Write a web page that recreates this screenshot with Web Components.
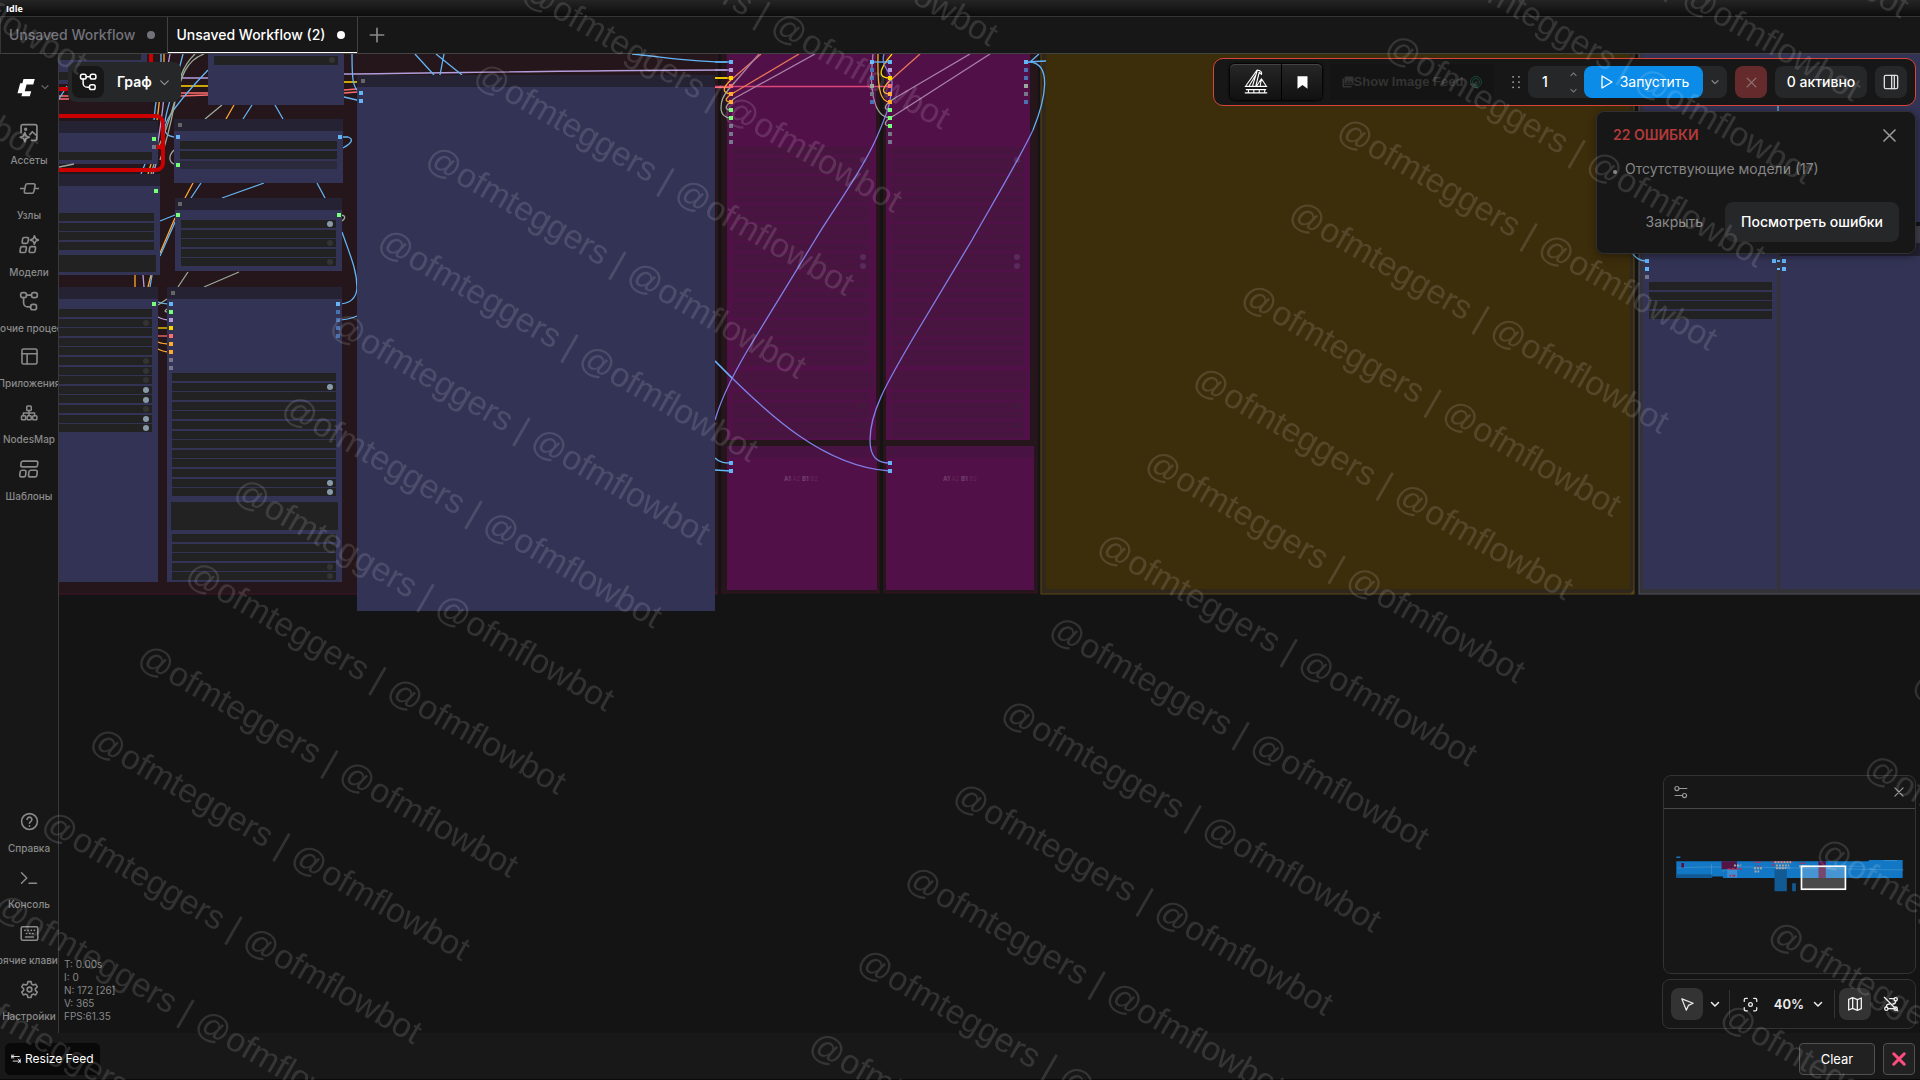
<!DOCTYPE html>
<html lang="ru">
<head>
<meta charset="utf-8">
<title>Unsaved Workflow (2)</title>
<style>
    :root {
        --font-ui: Inter, "Liberation Sans", sans-serif;
        --color-bg: #141414;
        --color-panel: #171717;
        --color-raised: #262729;
        --color-line: #333333;
        --color-text: #ffffff;
        --color-muted: #8a8a8a;
        --color-primary: #0b8ce9;
        --color-danger: #b33a3a;
    }

    html, body {
        height: 100%;
    }

    body {
        margin: 0;
        overflow: hidden;
        background: var(--color-bg);
        color: var(--color-text);
        font: 14px/20px var(--font-ui);
    }
</style>
</head>
<body>
<workflow-app></workflow-app>

<script>
    // Shared by every shadow root.
    const RESET = `
        :host, * { box-sizing: border-box; }
        button, input {
            display: inline-flex;
            align-items: center;
            justify-content: center;
            margin: 0;
            padding: 0;
            border: 0;
            background: none;
            color: inherit;
            font: inherit;
            white-space: nowrap;
        }
        button { cursor: pointer; }
    `;

    const ICONS = {
        plus: '<path d="M12 4v16M4 12h16"/>',
        x: '<path d="M5 5l14 14M19 5L5 19"/>',
        down: '<path d="M5 9l7 7 7-7"/>',
        up: '<path d="M5 15l7-7 7 7"/>',
        logo: '<path fill="currentColor" stroke="none" d="M9 2.500h13.500l-1.800 6.500h-8l-2.200 8h7.800l-1.800 6H6.500l1-3.500H1.800L5 7.500h2.700z"/>',
        assets: '<path d="M2.500 11V4a2 2 0 0 1 2-2h15a2 2 0 0 1 2 2v15a2 2 0 0 1-2 2H15M13 14l3-3.500 5.500 5"/><circle cx="8" cy="7.500" r="1"/><path d="M7 11.500l1.500 4 4 1.500-4 1.500-1.500 4-1.500-4-4-1.500 4-1.500z"/>',
        nodes: '<path d="M0 12h5.500M18.500 12H24M17.500 6H9.500A2.500 2.500 0 0 0 7 8L5.500 15.500A2 2 0 0 0 7.500 18H15a2.500 2.500 0 0 0 2.500-2L19 8.500A2 2 0 0 0 17.500 6z"/>',
        models: '<g transform="skewX(-8)"><rect x="5" y="3" width="7" height="7" rx="1.500"/><rect x="4" y="14" width="7" height="7" rx="1.500"/><rect x="15" y="14" width="7" height="7" rx="1.500"/></g><path d="M18.500 1l1.500 3.500L23.500 6 20 7.500 18.500 11 17 7.500 13.500 6 17 4.500z"/>',
        workflow: '<rect x="2" y="2" width="7" height="6" rx="2.500"/><rect x="15" y="2" width="7" height="6" rx="2.500"/><rect x="14" y="16" width="7" height="6.500" rx="2.500"/><path d="M9 5h6M5.500 8v6a5 5 0 0 0 5 5H14"/>',
        branch: '<rect x="2" y="1.500" width="7.500" height="6.500" rx="2.500"/><rect x="15" y="1.500" width="7.500" height="6.500" rx="2.500"/><rect x="14" y="15.500" width="7.500" height="6.500" rx="2.500"/><path d="M9.500 5H15M5.500 8v5.500a5.500 5.500 0 0 0 5.500 5.500h3"/>',
        apps: '<rect x="2.500" y="2.500" width="19" height="19" rx="2"/><path d="M2.500 8.500h19M9 8.500v13"/>',
        map_tree: '<rect x="9" y="2.500" width="6" height="6" rx="1"/><rect x="2" y="15.500" width="5.500" height="5.500" rx="1"/><rect x="9.500" y="15.500" width="5.500" height="5.500" rx="1"/><rect x="17" y="15.500" width="5.500" height="5.500" rx="1"/><path d="M12 8.500v7M4.500 15.500V12h15v3.500"/>',
        templates: '<g transform="skewX(-6)"><rect x="3" y="2.500" width="20" height="7" rx="2"/><rect x="3" y="13.500" width="7" height="8" rx="2"/><rect x="13.500" y="13.500" width="10" height="8" rx="2"/></g>',
        help: '<circle cx="12" cy="12" r="10"/><path d="M9 9.500a3 3 0 1 1 4.500 2.600c-1 .6-1.500 1-1.500 2.200M12 17.500v.5"/>',
        terminal: '<path d="M2 5l7 7-7 7M12 19h10"/>',
        keyboard: '<rect x="1.500" y="3.500" width="21" height="17" rx="2"/><path d="M6 8h.5M10 8h.5M14 8h.5M18 8h.5M8 12h.5M12 12h.5M16 12h.5M7 16.500h10"/>',
        gear: '<circle cx="12" cy="12" r="3"/><path d="M10 2h4l.7 3.200 2 1.100 3.100-1 2 3.500-2.400 2.200v2.200l2.400 2.200-2 3.400-3.100-1-2 1.200L14 22h-4l-.7-3-2-1.200-3.100 1-2-3.400 2.400-2.200V11L2.200 8.800l2-3.500 3.100 1 2-1.100z"/>',
        bookmark: '<path fill="currentColor" stroke="none" d="M4 2h16v20l-8-6-8 6z"/>',
        dots: '<path stroke-width="3" d="M7 3h.1M17 3h.1M7 12h.1M17 12h.1M7 21h.1M17 21h.1"/>',
        play: '<path d="M6 3l15 9-15 9z"/>',
        sidebar: '<rect x="2" y="2" width="20" height="20" rx="2"/><path d="M13 2v20M17 2v20"/>',
        photos: '<path fill="currentColor" stroke="none" d="M7 1h14a2 2 0 0 1 2 2v13a2 2 0 0 1-2 2H7a2 2 0 0 1-2-2V3a2 2 0 0 1 2-2zM1 5h3v15h15v3H3a2 2 0 0 1-2-2z"/><path stroke="#151515" d="M8 15l4-5 3 3 2-2 3 4z"/>',
        sliders: '<circle cx="5" cy="6" r="3.500"/><path d="M9 6h13M2 18h12"/><circle cx="18" cy="18" r="3.500"/>',
        pointer: '<path d="M3 3l18 7-7.500 3.500L10 21z"/>',
        focus: '<circle cx="12" cy="12" r="3"/><path d="M2 7V4.500A2.500 2.500 0 0 1 4.500 2H7M17 2h2.500A2.500 2.500 0 0 1 22 4.500V7M22 17v2.500a2.500 2.500 0 0 1-2.500 2.500H17M7 22H4.500A2.500 2.500 0 0 1 2 19.500V17"/>',
        map: '<path d="M2.500 5l6-2.500 7 3 6-2.500v16l-6 2.500-7-3-6 2.500zM8.500 2.500v16M15.500 5.500v16"/>',
        unlink: '<circle cx="5" cy="19" r="2.500"/><circle cx="19" cy="5" r="2.500"/><circle cx="19" cy="19" r="2.500"/><path d="M2 2l20 20M10 4h6.500M7.500 19h9M5 16.500c0-3 1.500-4.500 5-4.500M15 12c3 0 4-1.500 4-4.500"/>',
        swap: '<path d="M7 2L2 6l5 4M2 6h18M17 12l5 5-5 4M22 17H5M2 2v8M22 12v9"/>',
        boat: '<path d="M2 16h20M3 19h18M2 22h20M3 15L13 1c3 0 5 2 4 4l-2-2-3 12M6 15l6-10M9 15l4-13M13 15l4-6 4 6M17 9l-1 6M5 19v3M10 19v3M15 19v3M20 19v3"/>'
    };

    class UiIcon extends HTMLElement {
        connectedCallback() {
            const size = this.getAttribute('size') || 16;
            const weight = this.getAttribute('weight') || 2;
            this.attachShadow({ mode: 'open' }).innerHTML = `
                <style>
                    :host { display: inline-flex; flex: none; }
                    svg { display: block; }
                </style>
                <svg width="${size}" height="${size}" viewBox="0 0 24 24" fill="none" stroke="currentColor"
                     stroke-width="${weight}" stroke-linecap="round" stroke-linejoin="round" aria-hidden="true">
                    ${ICONS[this.getAttribute('name')]}
                </svg>
            `;
        }
    }

    class StatusBar extends HTMLElement {
        connectedCallback() {
            this.attachShadow({ mode: 'open' }).innerHTML = `
                <style>
                    ${RESET}
                    :host {
                        display: flex;
                        align-items: center;
                        height: 16px;
                        padding: 2px 6px 0;
                        background: linear-gradient(#242424, #0c0c0c);
                        font: bold 9px/14px "Open Sans", sans-serif;
                    }
                </style>
                <slot></slot>
            `;
        }
    }

    class WorkflowTab extends HTMLElement {
        connectedCallback() {
            this.attachShadow({ mode: 'open' }).innerHTML = `
                <style>
                    ${RESET}
                    :host { display: flex; border-right: 1px solid #424242; }
                    button {
                        gap: 12px;
                        padding: 0 12px 0 8px;
                        border-bottom: 1px solid transparent;
                        color: #72727a;
                        font-weight: 500;
                    }
                    i {
                        width: 8px;
                        height: 8px;
                        border-radius: 50%;
                        background: currentColor;
                    }
                    :host([active]) button {
                        border-color: #fff;
                        color: #fff;
                    }
                </style>
                <button role="tab" aria-selected="${this.hasAttribute('active')}"><slot></slot><i></i></button>
            `;
        }
    }

    class TabStrip extends HTMLElement {
        connectedCallback() {
            this.attachShadow({ mode: 'open' }).innerHTML = `
                <style>
                    ${RESET}
                    :host {
                        display: flex;
                        height: 38px;
                        border-top: 1px solid #353535;
                        border-bottom: 1px solid #424242;
                        border-left: 1px solid #353535;
                        background: var(--color-panel);
                    }
                    .add { width: 38px; color: #8a8a8a; }
                </style>
                <slot></slot>
                <button class="add" aria-label="New workflow"><ui-icon name="plus" size="20" weight="2"></ui-icon></button>
            `;
        }
    }

    class SideItem extends HTMLElement {
        connectedCallback() {
            this.attachShadow({ mode: 'open' }).innerHTML = `
                <style>
                    ${RESET}
                    :host { display: block; height: 56px; }
                    button {
                        flex-direction: column;
                        gap: 9px;
                        width: 100%;
                        height: 100%;
                        overflow: hidden;
                        color: var(--color-muted);
                        font-size: 10px;
                        line-height: 16px;
                        font-weight: 500;
                    }
                </style>
                <button><ui-icon name="${this.getAttribute('icon')}" size="${this.getAttribute('size') || 19}" weight="2"></ui-icon><slot></slot></button>
            `;
        }
    }

    class SideBar extends HTMLElement {
        connectedCallback() {
            this.attachShadow({ mode: 'open' }).innerHTML = `
                <style>
                    ${RESET}
                    :host {
                        display: flex;
                        flex-direction: column;
                        justify-content: space-between;
                        flex: none;
                        width: 59px;
                        padding-bottom: 3px;
                        border-right: 1px solid #3a3a3a;
                        background: var(--color-panel);
                    }
                    .logo { gap: 4px; width: 100%; height: 63px; padding: 2px 0 0 8px; }
                    .logo ui-icon + ui-icon { color: #666; }
                    nav { display: flex; flex-direction: column; }
                </style>
                <nav>
                    <button class="logo" aria-label="Menu">
                        <ui-icon name="logo" size="20"></ui-icon><ui-icon name="down" size="10" weight="3"></ui-icon>
                    </button>
                    <side-item icon="assets" size="20">Ассеты</side-item>
                    <side-item icon="nodes">Узлы</side-item>
                    <side-item icon="models" size="20">Модели</side-item>
                    <side-item icon="workflow" size="20">Рабочие процессы</side-item>
                    <side-item icon="apps">Приложения</side-item>
                    <side-item icon="map_tree" size="18">NodesMap</side-item>
                    <side-item icon="templates" size="20">Шаблоны</side-item>
                </nav>
                <nav>
                    <side-item icon="help">Справка</side-item>
                    <side-item icon="terminal" size="18">Консоль</side-item>
                    <side-item icon="keyboard">Горячие клавиши</side-item>
                    <side-item icon="gear">Настройки</side-item>
                </nav>
            `;
        }
    }

    // ---- graph drawing ----

    const C = {
        blue: '#64b5f6', dimblue: '#4a72b0', green: '#77ff77', lav: '#b39ddb', yellow: '#ffd500',
        red: '#ff6e6e', orange: '#ffa931', gray: '#77778a', sage: '#99aa99', pink: '#e0457a', peri: '#8080e8'
    };
    const NODE = '#333355', HEAD = '#242233', WELL = '#222222';
    const ROW = 9.6;

    const rect = (x1, y1, x2, y2, fill, extra = '') =>
        `<rect x="${x1}" y="${y1}" width="${x2 - x1}" height="${y2 - y1}" fill="${fill}" ${extra}/>`;
    const node = (x1, y1, x2, y2, headed = true) =>
        rect(x1, y1, x2, y2, NODE) + (headed ? rect(x1, y1, x2, y1 + 12, HEAD) : '');
    const knob = (x, y) => rect(x - 2, y - 2, x + 2, y + 2, '#666666');
    const port = (x, y, c) => rect(x - 2, y - 2, x + 2, y + 2, C[c]);
    const ports = (x, y, list) => list.split(' ').map((c, i) => port(x, y + i * 8, c)).join('');
    const rows = (x1, x2, y, n, fill = WELL) => Array.from({ length: n }, (_, i) => {
        const top = Math.round(y + i * ROW);
        return rect(x1, top, x2, top + 8, fill);
    }).join('');
    const dot = (x, y, on) => `<circle cx="${x}" cy="${y}" r="3" fill="${on ? '#8899aa' : '#333333'}"/>`;
    const link = (c, d) => `<path d="${d}" stroke="${C[c]}" fill="none"/>`;
    const group = (x1, y1, x2, y2, fill, line) =>
        `<rect x="${x1}" y="${y1}" width="${x2 - x1}" height="${y2 - y1}" fill="${fill}" stroke="${line}" stroke-width="1"/>` +
        `<path d="M${x2} ${y2 - 4}V${y2}H${x2 - 4}z" fill="${line}"/>`;

    const BACK = [
        group(40, 40, 717, 594, '#24161b', '#43152a'),
        group(722, 40, 879, 593, '#24161b', '#35131f'),
        group(884, 40, 1037, 593, '#24161b', '#35131f'),
        group(1041, 40, 1634, 594, '#30281a', '#5e4617'),
        group(1639, 40, 1940, 594, '#333338', '#53535c'),

        link('lav', 'M179 78H208M344 74C450 73 600 70 731 70'),
        link('yellow', 'M179 86H208M344 82H357M715 78H731'),
        link('red', 'M59 96H69M59 99H69M179 93H208M179 96L208 95M344 90L357 89M344 93L357 92'),
        link('blue', 'M352 54C352 75 352 90 361 93M344 97L361 101'),
        link('blue', 'M415 54L434 75M436 54L462 75M444 54L440 75M632 54C665 57 690 62 731 62'),
        link('blue', 'M339 137H348C354 139 352 143 343 148'),
        link('sage', 'M339 215C346 215 346 218 342 221'),
        link('blue', 'M342 232C350 255 357 270 357 288C356 301 347 304 338 304M338 320C345 320 350 319 357 316'),
        link('sage', 'M222 105L205 119M188 272L178 287M239 272L204 287'),
        link('orange', 'M234 105L226 119M193 183L185 198M175 218L160 253'),
        link('blue', 'M252 105L243 119M275 105L283 119M201 183L191 198M264 183L222 198M317 183L325 198'),
        link('blue', 'M160 221L175 215M176 220L160 256M59 99L67 86'),
        link('orange', 'M135 275V287M151 275L148 287M158 342C162 344 166 344 171 344M158 349C163 352 166 352 171 352'),
        link('blue', 'M152 275L150 287M158 302C163 304 166 304 171 304'),
        link('lav', 'M143 275L144 287M158 317C163 320 166 320 171 320'),
        link('sage', 'M158 305L167 299M167 309C163 312 166 312 171 312M174 150C168 156 168 164 178 165'),
        link('yellow', 'M158 328H171'),
        link('red', 'M158 336H171'),
        link('blue', 'M208 70C170 110 150 137 178 137M183 54C174 90 166 110 165 122'),
        link('blue', 'M161 54V80C155 100 155 110 154 120M145 164L141 174'),
        link('orange', 'M164 54V80C158 100 159 110 157 120M151 164L148 174'),
        link('lav', 'M170 54C164 85 164 110 157 147M156 164L153 174'),
        link('sage', 'M204 54C174 65 182 100 157 150M195 54C172 75 180 105 160 160M154 164L151 174')
    ].join('');

    const LEFT = [
        rect(59, 54, 147, 84, NODE), rect(59, 54, 141, 60, WELL), rect(59, 72, 147, 80, WELL),
        '<rect x="30" y="30" width="121" height="59" rx="7" fill="none" stroke="#cc0000" stroke-width="4"/>',
        node(59, 121, 158, 164), ports(154, 139, 'green gray'), rows(59, 152, 152, 1),
        '<path d="M59 167L74 164" stroke="#99aa99"/>',
        '<rect x="30" y="116" width="133" height="54" rx="7" fill="none" stroke="#cc0000" stroke-width="4"/>',
        '<path d="M157 145l4 4M161 145l-4 4" stroke="#e00000" stroke-width="2"/>',

        node(59, 174, 160, 275), port(156, 191, 'green'), rows(59, 154, 213, 4), rect(59, 255, 156, 272, WELL),
        node(59, 287, 158, 582), port(154, 304, 'green'), rows(59, 152, 309, 13),
        [323, 361, 371, 380, 409].map(y => dot(146, y)).join(''),
        [390, 400, 419, 428].map(y => dot(146, y, true)).join(''),

        node(208, 50, 344, 105, false), rect(214, 56, 338, 65, WELL), dot(332, 60),
        node(174, 119, 343, 183), knob(180, 125), port(178, 137, 'blue'), port(340, 137, 'blue'),
        port(178, 165, 'green'), rows(180, 337, 141, 2), rect(180, 161, 337, 169, '#2a2a3c'),
        node(175, 198, 342, 271), knob(180, 204), port(178, 215, 'green'), port(339, 215, 'green'),
        rows(181, 336, 220, 5), dot(330, 224, true), dot(330, 243), dot(330, 262),
        node(167, 287, 342, 582), knob(173, 293), ports(171, 304, 'blue green lav yellow red orange orange gray gray'),
        ports(338, 304, 'blue dimblue dimblue dimblue dimblue'), rows(172, 336, 373, 13),
        dot(330, 387, true), dot(330, 483, true), dot(330, 492, true),
        rect(171, 502, 338, 530, WELL), rows(172, 336, 534, 5), dot(330, 567), dot(330, 576)
    ].join('');

    const PLUM = '#521049', PLUM_DARK = '#481540';
    const plumNode = (x1, x2, wide) => [
        rect(x1, 50, x2, 440, PLUM),
        rows(x1 + 5, x2 - 6, 147, 23, PLUM_DARK),
        rect(x1 + 5, 371, x2 - 3, 389, PLUM_DARK),
        rows(x1 + 5, x2 - 6, 392, 5, PLUM_DARK),
        [160, 257, 266].map(y => `<circle cx="${x2 - 13}" cy="${y}" r="3" fill="#5a2a5c"/>`).join(''),
        [406, 425].map(y => `<circle cx="${x2 - 13}" cy="${y}" r="3" fill="#431a3e"/>`).join(''),
        rect(x1, 446, wide, 590, PLUM), rect(x1, 446, wide, 458, '#481343'), rect(x1 + 4, 450, x1 + 8, 454, '#42183e'),
        `<text x="${x1 + 57}" y="481" font-size="6" fill="#75406e"><tspan font-weight="700">A1</tspan> <tspan opacity=".5">A2</tspan> <tspan font-weight="700">B1</tspan> <tspan opacity=".5">B2</tspan></text>`
    ].join('');

    const PLUMS = [
        plumNode(727, 876, 877), plumNode(886, 1030, 1034),
        link('pink', 'M715 86.500H890'), link('red', 'M715 87.500H731'),
        link('lav', 'M715 70H731'), link('yellow', 'M715 78H731'), link('blue', 'M715 62H731'),
        '<g stroke="#e87858" fill="none"><path d="M761 54L731 80M799 54L735 92M920 54L893 78"/></g>',
        '<g stroke="#a880a8" fill="none"><path d="M815 54L735 98M759 54L735 82M970 54L895 98M990 54L895 115M873 54C870 85 872 95 876 106"/></g>',
        link('orange', 'M731 80C723 87 721 93 731 94M735 92C724 98 724 102 731 102'),
        link('sage', 'M735 98C724 106 724 110 731 110M735 82C721 97 721 102 721 108C721 115 726 118 731 118'),
        link('orange', 'M878 54C877 95 882 102 890 102M893 78C882 87 880 94 890 94'),
        link('yellow', 'M892 54C880 68 876 78 890 78'),
        link('sage', 'M876 106C880 115 884 117 890 118M895 98C882 106 884 110 890 110M895 115C882 122 884 126 890 126'),
        link('blue', 'M872 62H890'),
        link('peri', 'M884 54C880 68 893 72 892 84C891 104 886 116 876 139C860 175 832 211 815 240L755 338C735 370 722 396 715 420'),
        link('peri', 'M715 361C770 417 825 467 890 471'),
        link('blue', 'M715 361L732 378M715 458C720 463 725 463 731 463M715 470L731 471'),
        link('blue', 'M1026 62L1046 61M1030 62L1039 54M1030 62C1052 64 1046 98 1033 130'),
        link('peri', 'M1033 130C1020 158 990 208 972 240L912 340C890 378 870 410 870 440C870 458 878 463 890 463'),
        ports(731, 62, 'blue lav yellow red orange orange green green gray gray gray'),
        ports(890, 62, 'blue lav yellow red orange orange green green green gray gray'),
        ports(872, 62, 'blue dimblue dimblue sage gray dimblue'),
        ports(1026, 62, 'blue dimblue dimblue sage gray dimblue'),
        ports(731, 463, 'blue blue'), ports(890, 463, 'blue blue')
    ].join('');

    const RIGHT = [
        rect(1046, 50, 1630, 589, '#3c2d0b'),
        rect(1643, 50, 1777, 589, NODE), rect(1780, 50, 1940, 589, NODE),
        rect(1780, 222, 1940, 226, '#141414'), rect(1780, 226, 1940, 243, '#40404c'), rect(1780, 243, 1940, 256, HEAD),
        link('blue', 'M1778 104V112M1630 250C1636 259 1640 261 1647 261'),
        ports(1647, 261, 'blue blue gray'), rows(1649, 1772, 282, 4),
        port(1774, 261, 'blue'), ports(1784, 261, 'blue blue'),
        rect(1777, 260, 1780, 262, C.blue), rect(1777, 268, 1780, 270, C.blue)
    ].join('');

    const BIG = [
        node(357, 75, 715, 611), knob(363, 81), ports(361, 93, 'blue blue')
    ].join('');

    // Scene coordinates are window coordinates, hence the shift by the sidebar and header.
    class GraphCanvas extends HTMLElement {
        connectedCallback() {
            this.attachShadow({ mode: 'open' }).innerHTML = `
                <style>
                    ${RESET}
                    :host {
                        display: block;
                        position: relative;
                        flex: 1;
                        min-width: 0;
                        overflow: hidden;
                        background: var(--color-bg);
                    }
                    .scene {
                        position: absolute;
                        width: 100%;
                        height: 100%;
                        font-family: var(--font-ui);
                    }
                    .overlay {
                        position: absolute;
                        inset: 0;
                        display: flex;
                        justify-content: space-between;
                        padding: 4px;
                    }
                    .side {
                        display: flex;
                        flex-direction: column;
                        justify-content: space-between;
                        align-items: flex-start;
                    }
                    .side.end { align-items: flex-end; }
                    .stack {
                        display: flex;
                        flex-direction: column;
                        align-items: flex-end;
                        gap: 5px;
                    }
                </style>
                <svg class="scene" aria-hidden="true">
                    <g transform="translate(-59 -54)" stroke-width="1.3">${BACK}${LEFT}${PLUMS}${RIGHT}${BIG}</g>
                </svg>
                <div class="overlay">
                    <div class="side"><slot name="top-left"></slot><slot name="bottom-left"></slot></div>
                    <div class="side end">
                        <div class="stack"><slot name="top-right"></slot></div>
                        <div class="stack"><slot name="bottom-right"></slot></div>
                    </div>
                </div>
            `;
        }
    }

    class GraphMode extends HTMLElement {
        connectedCallback() {
            this.attachShadow({ mode: 'open' }).innerHTML = `
                <style>
                    ${RESET}
                    :host { display: block; padding: 4px 5px; }
                    button {
                        height: 40px;
                        padding: 0 10px 0 4px;
                        border-radius: 8px;
                        background: var(--color-raised);
                        font-weight: 600;
                    }
                    .mark {
                        display: flex;
                        align-items: center;
                        justify-content: center;
                        width: 32px;
                        height: 32px;
                        margin-right: 13px;
                        border-radius: 8px;
                        background: var(--color-panel);
                    }
                    .chevron { margin-left: 6px; color: #999; }
                </style>
                <button>
                    <span class="mark"><ui-icon name="branch" size="18"></ui-icon></span>
                    Граф
                    <ui-icon class="chevron" name="down" size="13" weight="2"></ui-icon>
                </button>
            `;
        }
    }

    class RenderStats extends HTMLElement {
        connectedCallback() {
            this.attachShadow({ mode: 'open' }).innerHTML = `
                <style>
                    ${RESET}
                    :host {
                        display: block;
                        padding: 0 1px 6px;
                        color: #888;
                        font-size: 10px;
                        line-height: 13px;
                    }
                </style>
                <div>T: 0.00s</div>
                <div>I: 0</div>
                <div>N: 172 [26]</div>
                <div>V: 365</div>
                <div>FPS:61.35</div>
            `;
        }
    }

    class ActionBar extends HTMLElement {
        connectedCallback() {
            this.attachShadow({ mode: 'open' }).innerHTML = `
                <style>
                    ${RESET}
                    :host {
                        display: flex;
                        align-items: center;
                        gap: 8px;
                        height: 48px;
                        padding: 0 8px 0 16px;
                        border: 1px solid #d9453a;
                        border-radius: 10px;
                        background: var(--color-panel);
                    }
                    .pair {
                        display: flex;
                        border-radius: 5px;
                        background: linear-gradient(#262626, #111);
                        box-shadow: 0 0 2px 1px #000, inset 0 1px #444;
                    }
                    .pair button { width: 40px; height: 36px; }
                    .pair button:first-child { width: 52px; border-right: 1px solid #000; }
                    .feed {
                        width: 164px;
                        height: 36px;
                        background: #141414;
                        color: #333;
                        font: bold 13px/20px "Liberation Sans", sans-serif;
                    }
                    .feed i {
                        width: 12px;
                        height: 12px;
                        margin-left: 7px;
                        border: 3px double #18473a;
                        border-radius: 50%;
                    }
                    .grip { margin: 0 -3px 0 7px; color: #aaa; }
                    .queue {
                        display: flex;
                        border-radius: 8px;
                        background: var(--color-raised);
                    }
                    .queue input { width: 34px; text-align: center; outline: 0; font-weight: 500; }
                    .steps {
                        display: flex;
                        flex-direction: column;
                        align-items: center;
                        justify-content: space-between;
                        width: 22px;
                        padding: 4px 0 3px;
                        color: #777;
                    }
                    .run {
                        gap: 6px;
                        width: 119px;
                        height: 32px;
                        border-radius: 8px;
                        background: var(--color-primary);
                    }
                    .more { width: 24px; color: #888; }
                    .cancel, .active, .toggle { height: 32px; border-radius: 8px; background: var(--color-raised); }
                    .cancel { width: 32px; background: #652a2b; color: #8f7475; }
                    .active { width: 92px; font-weight: 500; }
                    .toggle { width: 32px; color: #ddd; }
                </style>
                <div class="pair">
                    <button aria-label="Manager"><ui-icon name="boat" size="26" weight="1"></ui-icon></button>
                    <button aria-label="Bookmarks"><ui-icon name="bookmark" size="15"></ui-icon></button>
                </div>
                <button class="feed"><ui-icon name="photos" size="12"></ui-icon>Show Image Feed<i></i></button>
                <ui-icon class="grip" name="dots" size="14"></ui-icon>
                <div class="queue">
                    <input value="1" aria-label="Batch count">
                    <div class="steps">
                        <button aria-label="More"><ui-icon name="up" size="9" weight="3"></ui-icon></button>
                        <button aria-label="Less"><ui-icon name="down" size="9" weight="3"></ui-icon></button>
                    </div>
                    <button class="run"><ui-icon name="play" size="16" weight="2"></ui-icon>Запустить</button>
                    <button class="more" aria-label="Run options"><ui-icon name="down" size="10" weight="3"></ui-icon></button>
                </div>
                <button class="cancel" aria-label="Cancel"><ui-icon name="x" size="15"></ui-icon></button>
                <button class="active">0 активно</button>
                <button class="toggle" aria-label="Toggle panel"><ui-icon name="sidebar" size="16" weight="2"></ui-icon></button>
            `;
        }
    }

    class ErrorCard extends HTMLElement {
        connectedCallback() {
            this.attachShadow({ mode: 'open' }).innerHTML = `
                <style>
                    ${RESET}
                    :host {
                        display: block;
                        width: 320px;
                        padding: 10px 16px 11px;
                        border: 1px solid #303033;
                        border-radius: 8px;
                        background: var(--color-panel);
                        box-shadow: 1px 2px 8px rgba(0, 0, 0, .4);
                    }
                    header, footer { display: flex; align-items: center; }
                    header { justify-content: space-between; height: 26px; }
                    header button { width: 20px; color: #999; }
                    h2 { margin: 0; color: var(--color-danger); font-size: 14px; font-weight: 600; }
                    ul { margin: 9px 0 21px; padding-left: 12px; list-style: none; color: #858585; }
                    li { position: relative; line-height: 24px; }
                    li::before {
                        content: "";
                        position: absolute;
                        left: -12px;
                        top: 13px;
                        width: 4px;
                        height: 4px;
                        border-radius: 50%;
                        background: currentColor;
                    }
                    footer { justify-content: flex-end; gap: 22px; }
                    footer button { height: 40px; color: var(--color-muted); }
                    footer .primary {
                        padding: 0 16px;
                        border-radius: 8px;
                        background: var(--color-raised);
                        color: #fff;
                        font-weight: 500;
                    }
                </style>
                <header>
                    <h2>22 ОШИБКИ</h2>
                    <button aria-label="Dismiss"><ui-icon name="x" size="19"></ui-icon></button>
                </header>
                <ul><li>Отсутствующие модели (17)</li></ul>
                <footer>
                    <button>Закрыть</button>
                    <button class="primary">Посмотреть ошибки</button>
                </footer>
            `;
        }
    }

    class MiniMap extends HTMLElement {
        connectedCallback() {
            this.attachShadow({ mode: 'open' }).innerHTML = `
                <style>
                    ${RESET}
                    :host {
                        display: block;
                        width: 253px;
                        border: 1px solid var(--color-line);
                        border-radius: 8px;
                        background: var(--color-panel);
                    }
                    header {
                        display: flex;
                        align-items: center;
                        justify-content: space-between;
                        height: 33px;
                        padding: 0 9px 0 10px;
                        border-bottom: 1px solid #484848;
                        color: #999;
                    }
                    svg { display: block; width: 100%; }
                </style>
                <header>
                    <button aria-label="Map settings"><ui-icon name="sliders" size="14"></ui-icon></button>
                    <button aria-label="Close map"><ui-icon name="x" size="14"></ui-icon></button>
                </header>
                <svg viewBox="0 0 754 494" aria-hidden="true">
                    <g fill="#1277c4">
                        <path d="M37 157h578v-4h102v54H177v-4h-37v2H37zM37 143h12v4H37z"/>
                        <path fill="#115a94" d="M37 196h108v11H37zM332 180h37v67h-37zM385 223h11v24h-11z"/>
                        <path fill="#3b8fd2" d="M190 176h30v30h-30zM340 174h40v6h-40z"/>
                    </g>
                    <path d="M40 177C200 169 400 179 720 183M143 165v34M175 187l60-20M540 172h60M660 155h40" stroke="#7fb4dc" stroke-width="2" fill="none" opacity=".5"/>
                    <path fill="#541444" d="M173 157h46v24h-46zM52 162h8v14h-8zM464 157h22v50h-22z"/>
                    <path stroke="#b03058" stroke-width="5" stroke-dasharray="5 4 9 5" d="M194 180h40M270 160h26M196 200h20M322 159h66M280 172h10M406 163h22M324 168h10"/>
                    <path stroke="#a8a8a8" stroke-width="6" stroke-dasharray="6 3" d="M332 160h50M336 170h40M336 178h30M270 178h26M272 188h14M406 172h30M210 170h20"/>
                    <rect x="413" y="172" width="132" height="69" fill="#fff" fill-opacity=".22" stroke="#fff" stroke-width="5"/>
                </svg>
            `;
        }
    }

    class ViewControls extends HTMLElement {
        connectedCallback() {
            this.attachShadow({ mode: 'open' }).innerHTML = `
                <style>
                    ${RESET}
                    :host {
                        display: flex;
                        align-items: center;
                        width: 254px;
                        height: 50px;
                        padding: 8px;
                        border: 1px solid var(--color-line);
                        border-radius: 8px;
                        background: var(--color-panel);
                        color: #eee;
                    }
                    button { width: 32px; height: 32px; border-radius: 8px; }
                    button:last-child { margin-left: auto; }
                    .on { background: #333; }
                    .narrow { width: 24px; }
                    .zoom { gap: 8px; width: 66px; font-size: 13px; font-weight: 600; }
                    hr { width: 1px; height: 28px; margin: 0 4px 0 2px; border: 0; background: var(--color-line); }
                </style>
                <button class="on" aria-label="Select"><ui-icon name="pointer" size="15"></ui-icon></button>
                <button class="narrow" aria-label="Tools"><ui-icon name="down" size="12" weight="3"></ui-icon></button>
                <hr>
                <button aria-label="Fit view"><ui-icon name="focus" size="15"></ui-icon></button>
                <button class="zoom">40% <ui-icon name="down" size="12" weight="3"></ui-icon></button>
                <hr>
                <button class="on" aria-label="Toggle map"><ui-icon name="map" size="16"></ui-icon></button>
                <button aria-label="Hide links"><ui-icon name="unlink" size="16"></ui-icon></button>
            `;
        }
    }

    class FeedBar extends HTMLElement {
        connectedCallback() {
            this.attachShadow({ mode: 'open' }).innerHTML = `
                <style>
                    ${RESET}
                    :host {
                        display: flex;
                        align-items: center;
                        gap: 8px;
                        height: 47px;
                        padding: 6px 5px 0;
                        border-bottom: 1px solid #0a0a0a;
                        background: #181818;
                    }
                    button {
                        height: 32px;
                        border: 1px solid #505050;
                        border-radius: 4px;
                        background: #212121;
                    }
                    .resize {
                        gap: 4px;
                        margin-right: auto;
                        padding: 0 5px;
                        border-color: #090909;
                        border-radius: 5px;
                        background: #090909;
                        font-size: 12px;
                    }
                    .clear { width: 76px; font-size: 13px; }
                    .close { width: 32px; color: #ff4d7d; }
                </style>
                <button class="resize"><ui-icon name="swap" size="10" weight="2"></ui-icon>Resize Feed</button>
                <button class="clear">Clear</button>
                <button class="close" aria-label="Close feed"><ui-icon name="x" size="18" weight="4"></ui-icon></button>
            `;
        }
    }

    // Slanted caption repeated over the window on a rotated grid.
    class WaterMark extends HTMLElement {
        connectedCallback() {
            this.attachShadow({ mode: 'open' });
            this._render();
            window.addEventListener('resize', () => this._render());
        }

        _render() {
            const STEP_X = 775, STEP_Y = 96, LENGTH = 430;
            const cos = Math.cos(Math.PI / 6), sin = 0.5;
            const w = window.innerWidth, h = window.innerHeight;
            let lines = '';
            for (let i = -1; i < w / 400; i++) {
                for (let j = -12; j < 14; j++) {
                    const u = 449 + i * STEP_X, v = -70 + j * STEP_Y;
                    const x = u * cos - v * sin, y = u * sin + v * cos;
                    if (x > w || y > h + 20 || x + LENGTH * cos < 0 || y + LENGTH * sin < 0) continue;
                    lines += `<text x="${u}" y="${v}">${this.getAttribute('text')}</text>`;
                }
            }
            this.shadowRoot.innerHTML = `
                <style>
                    :host { position: fixed; inset: 0; pointer-events: none; }
                    svg { display: block; width: 100%; height: 100%; }
                    text { font: 34px "Liberation Sans", sans-serif; fill: #fff; fill-opacity: .13; }
                </style>
                <svg aria-hidden="true"><g transform="rotate(30)">${lines}</g></svg>
            `;
        }
    }

    class WorkflowApp extends HTMLElement {
        connectedCallback() {
            this.attachShadow({ mode: 'open' }).innerHTML = `
                <style>
                    :host { display: flex; flex-direction: column; height: 100vh; }
                    main { display: flex; flex: 1; min-height: 0; }
                </style>
                <status-bar>Idle</status-bar>
                <tab-strip>
                    <workflow-tab>Unsaved Workflow</workflow-tab>
                    <workflow-tab active>Unsaved Workflow (2)</workflow-tab>
                </tab-strip>
                <main>
                    <side-bar></side-bar>
                    <graph-canvas>
                        <graph-mode slot="top-left"></graph-mode>
                        <render-stats slot="bottom-left"></render-stats>
                        <action-bar slot="top-right"></action-bar>
                        <error-card slot="top-right"></error-card>
                        <mini-map slot="bottom-right"></mini-map>
                        <view-controls slot="bottom-right"></view-controls>
                    </graph-canvas>
                </main>
                <feed-bar></feed-bar>
                <water-mark text="@ofmteggers | @ofmflowbot"></water-mark>
            `;
        }
    }

    customElements.define('ui-icon', UiIcon);
    customElements.define('status-bar', StatusBar);
    customElements.define('workflow-tab', WorkflowTab);
    customElements.define('tab-strip', TabStrip);
    customElements.define('side-item', SideItem);
    customElements.define('side-bar', SideBar);
    customElements.define('graph-canvas', GraphCanvas);
    customElements.define('graph-mode', GraphMode);
    customElements.define('render-stats', RenderStats);
    customElements.define('action-bar', ActionBar);
    customElements.define('error-card', ErrorCard);
    customElements.define('mini-map', MiniMap);
    customElements.define('view-controls', ViewControls);
    customElements.define('feed-bar', FeedBar);
    customElements.define('water-mark', WaterMark);
    customElements.define('workflow-app', WorkflowApp);
</script>
</body>
</html>
